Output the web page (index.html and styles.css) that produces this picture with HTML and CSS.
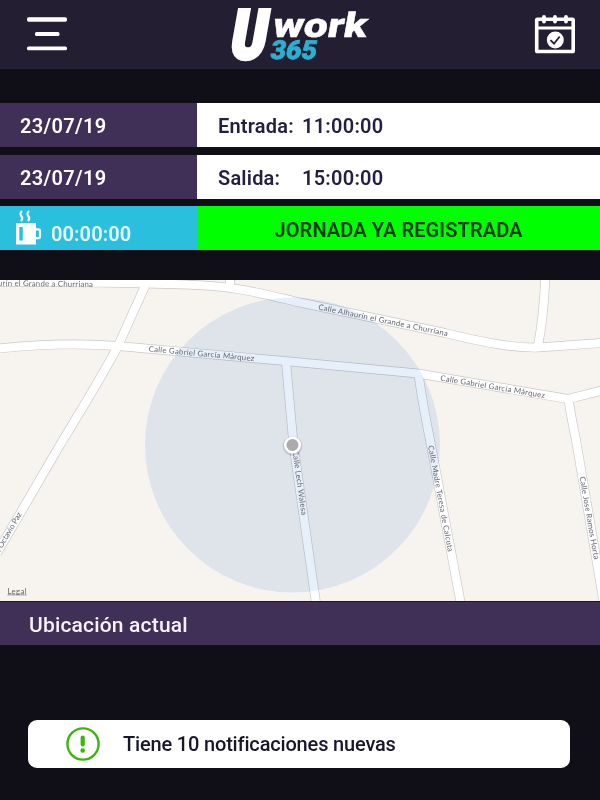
FILE: index.html
```html
<!DOCTYPE html>
<html lang="es">
<head>
<meta charset="utf-8">
<title>Uwork 365</title>
<link rel="stylesheet" href="styles.css">
</head>
<body>
<header class="topbar">
  <svg class="menu" width="40" height="36" viewBox="0 0 40 36" fill="#fff">
    <rect x="0" y="1.300" width="40" height="4.400" rx="1.600"/>
    <rect x="8" y="16" width="24.500" height="4" rx="1.600"/>
    <rect x="0" y="30.500" width="40" height="3.800" rx="1.600"/>
  </svg>
  <svg class="logo" width="150" height="66" viewBox="226 0 150 66">
    <g class="logo-text">
      <text class="logo-u" transform="translate(227.500 58) skewX(-10)" font-size="67" textLength="35" lengthAdjust="spacingAndGlyphs">U</text>
      <text class="logo-work" transform="translate(270.500 36.500) skewX(-10)" font-size="34" textLength="94" lengthAdjust="spacingAndGlyphs">work</text>
      <text class="logo-num" transform="translate(268.500 58.500) skewX(-10)" font-size="26" textLength="46" lengthAdjust="spacingAndGlyphs">365</text>
    </g>
  </svg>
  <svg class="calendar" width="42" height="42" viewBox="534 14 42 42">
    <g fill="none" stroke="#fff" stroke-linecap="round">
      <rect x="536.700" y="19.200" width="36.500" height="32.300" rx="0.800" stroke-width="3.600"/>
      <path d="M537 28H573" stroke-width="3"/>
      <path d="M544 16.800V21.500M555 16.800V21.500M566 16.800V21.500" stroke-width="3.800"/>
    </g>
    <circle cx="555.300" cy="40" r="8.500" fill="#fff"/>
    <path d="M550.500 40.200L554 43.700L559.700 36.500" fill="none" stroke="#241e33" stroke-width="1.800"/>
  </svg>
</header>

<main>
  <section class="records">
    <div class="row">
      <div class="date">23/07/19</div>
      <div class="entry"><span class="label">Entrada:</span><span class="time">11:00:00</span></div>
    </div>
    <div class="row">
      <div class="date">23/07/19</div>
      <div class="entry"><span class="label">Salida:</span><span class="time">15:00:00</span></div>
    </div>
    <div class="row">
      <div class="pause">
        <svg width="26" height="36" viewBox="16 211 26 36">
          <path d="M22 212c-5 5 3.500 5-1 10M29 212c-5 5 3.500 5-1 10" fill="none" stroke="#fff" stroke-width="2.200"/>
          <path d="M16 224H36V245.500H16ZM19.300 228V241.500H22.800V228Z" fill="#fff" fill-rule="evenodd"/>
          <path d="M35 230.300H38.500Q40 230.300 40 232V237.500Q40 239.200 38.500 239.200H35" fill="none" stroke="#fff" stroke-width="2.200"/>
        </svg>
        <span>00:00:00</span>
      </div>
      <div class="status">JORNADA YA REGISTRADA</div>
    </div>
  </section>

  <svg class="map" width="600" height="321" viewBox="0 280 600 321">
    <defs>
      <g id="roads">
        <path d="M0 282C80 282 140 283 185 284.500C235 286 255 292 300 302.500L445 333C490 344 515 348 538 347.500L601 343"/>
        <path d="M230 275V287"/>
        <path d="M545.500 275C544 310 542 325 538 346"/>
        <path d="M-2 348.500C40 344 80 343 118 346L290 361.500L418 373.500C470 382 520 391 568 399L602 390.500"/>
        <path d="M145 286L118 346C100 380 75 420 60 445L-3 553"/>
        <path d="M286 362L293.500 445L317 610"/>
        <path d="M418.500 374C422 400 426 420 430 440L462 610"/>
        <path d="M568.500 399C571 417 573 425 576 440L605 610"/>
      </g>
    </defs>
    <rect x="0" y="280" width="600" height="321" fill="#f7f4ef"/>
    <use href="#roads" class="road-edge"/>
    <use href="#roads" class="road-fill"/>
    <circle class="range" cx="292.500" cy="445" r="147.500"/>
    <g class="street">
      <text transform="translate(-2 285.800) rotate(.7)" textLength="95">urín el Grande a Churriana</text>
      <text transform="translate(318 309.500) rotate(11.700)" textLength="132">Calle Alhaurín el Grande a Churriana</text>
      <text transform="translate(148.500 351.500) rotate(5.200)" textLength="106">Calle Gabriel García Márquez</text>
      <text transform="translate(440 380.500) rotate(9.500)" textLength="106">Calle Gabriel García Márquez</text>
      <text transform="translate(-1 554) rotate(-60)" textLength="46">e Octavio Paz</text>
      <text transform="translate(292.500 451) rotate(82)" textLength="65">Calle Lech Walesa</text>
      <text transform="translate(428 446) rotate(79.300)" textLength="108">Calle Madre Teresa de Calcuta</text>
      <text transform="translate(579.500 477) rotate(80)" textLength="84">Calle Jose Ramos Horta</text>
      <text class="legal" x="7.500" y="593.500" textLength="19">Legal</text>
    </g>
    <circle cx="292.500" cy="446" r="9.800" fill="#777" opacity=".28"/>
    <circle cx="292.500" cy="445" r="7.300" fill="#ababab" stroke="#fff" stroke-width="2.500"/>
  </svg>
  <div class="location">Ubicación actual</div>

  <div class="notice">
    <svg width="34" height="34" viewBox="0 0 34 34">
      <circle cx="17" cy="17" r="15.600" fill="none" stroke="#3cb50f" stroke-width="2.400"/>
      <path d="M16.700 10.500V17.500" stroke="#3cb50f" stroke-width="4.200" stroke-linecap="round"/>
      <circle cx="16.700" cy="23.500" r="2.300" fill="#3cb50f"/>
    </svg>
    <span>Tiene 10 notificaciones nuevas</span>
  </div>
</main>
</body>
</html>
```
FILE: styles.css
```css
* { box-sizing: border-box; }

body {
  margin: 0;
  height: 800px;
  background: #100f17;
  color: #261e40;
  font: 600 20px/1 Roboto, sans-serif;
  overflow: hidden;
}

svg { display: block; flex: none; }

.topbar {
  display: flex;
  justify-content: space-between;
  align-items: flex-start;
  height: 69px;
  padding: 0 24px 0 27px;
  background: #241e33;
}
.menu { margin-top: 16px; }
.logo { margin-right: -2px; overflow: visible; }
.calendar { margin-top: 14px; }
.logo-text {
  font-family: Roboto, sans-serif;
  font-weight: 900;
  fill: #fff;
  stroke: #fff;
  stroke-width: .4;
}
.logo-text .logo-u { stroke-width: 5; }
.logo-text .logo-num { fill: #2dafd0; stroke: #2dafd0; stroke-width: .8; }

.records {
  display: grid;
  gap: 7.5px;
  padding: 34px 0 30px;
}
.row {
  display: grid;
  grid-template-columns: 197px 1fr;
  height: 44px;
}
.row > div { display: flex; align-items: center; padding-top: 2px; }
.row > .date {
  padding-left: 20px;
  background: #402f57;
  color: #fff;
  letter-spacing: .35px;
}
.row > .entry { padding-left: 21px; background: #fff; }
.label { width: 84px; letter-spacing: .2px; }
.time { letter-spacing: .25px; }
.row > .pause {
  gap: 9px;
  padding: 0 0 0 16px;
  background: #2bbfde;
  color: #e8fcff;
}
.pause span { padding-top: 12px; letter-spacing: .1px; }
.row > .status {
  justify-content: center;
  padding-top: 3px;
  letter-spacing: .1px;
  background: #0f0;
  color: #073b10;
}

.road-edge { fill: none; stroke: #c9c9c8; stroke-width: 9.5px; }
.road-fill { fill: none; stroke: #fff; stroke-width: 8.2px; }
.range { fill: #e7effb; mix-blend-mode: multiply; }
.street {
  font: 400 7.8px Lato, sans-serif;
  fill: #62676f;
}
.legal { text-decoration: underline; }

.location {
  display: flex;
  align-items: center;
  height: 44px;
  padding: 3px 0 0 29px;
  border-top: 1px solid #1d1338;
  background: #402f57;
  color: #f5f1fa;
  font-size: 21px;
  font-weight: 500;
  letter-spacing: .18px;
}

.notice {
  display: flex;
  align-items: center;
  gap: 23px;
  width: 542px;
  height: 48px;
  margin: 75px 0 0 28px;
  padding-left: 38px;
  border-radius: 9px;
  background: #fff;
  color: #18172a;
  font-weight: 500;
  letter-spacing: -.17px;
}
```
